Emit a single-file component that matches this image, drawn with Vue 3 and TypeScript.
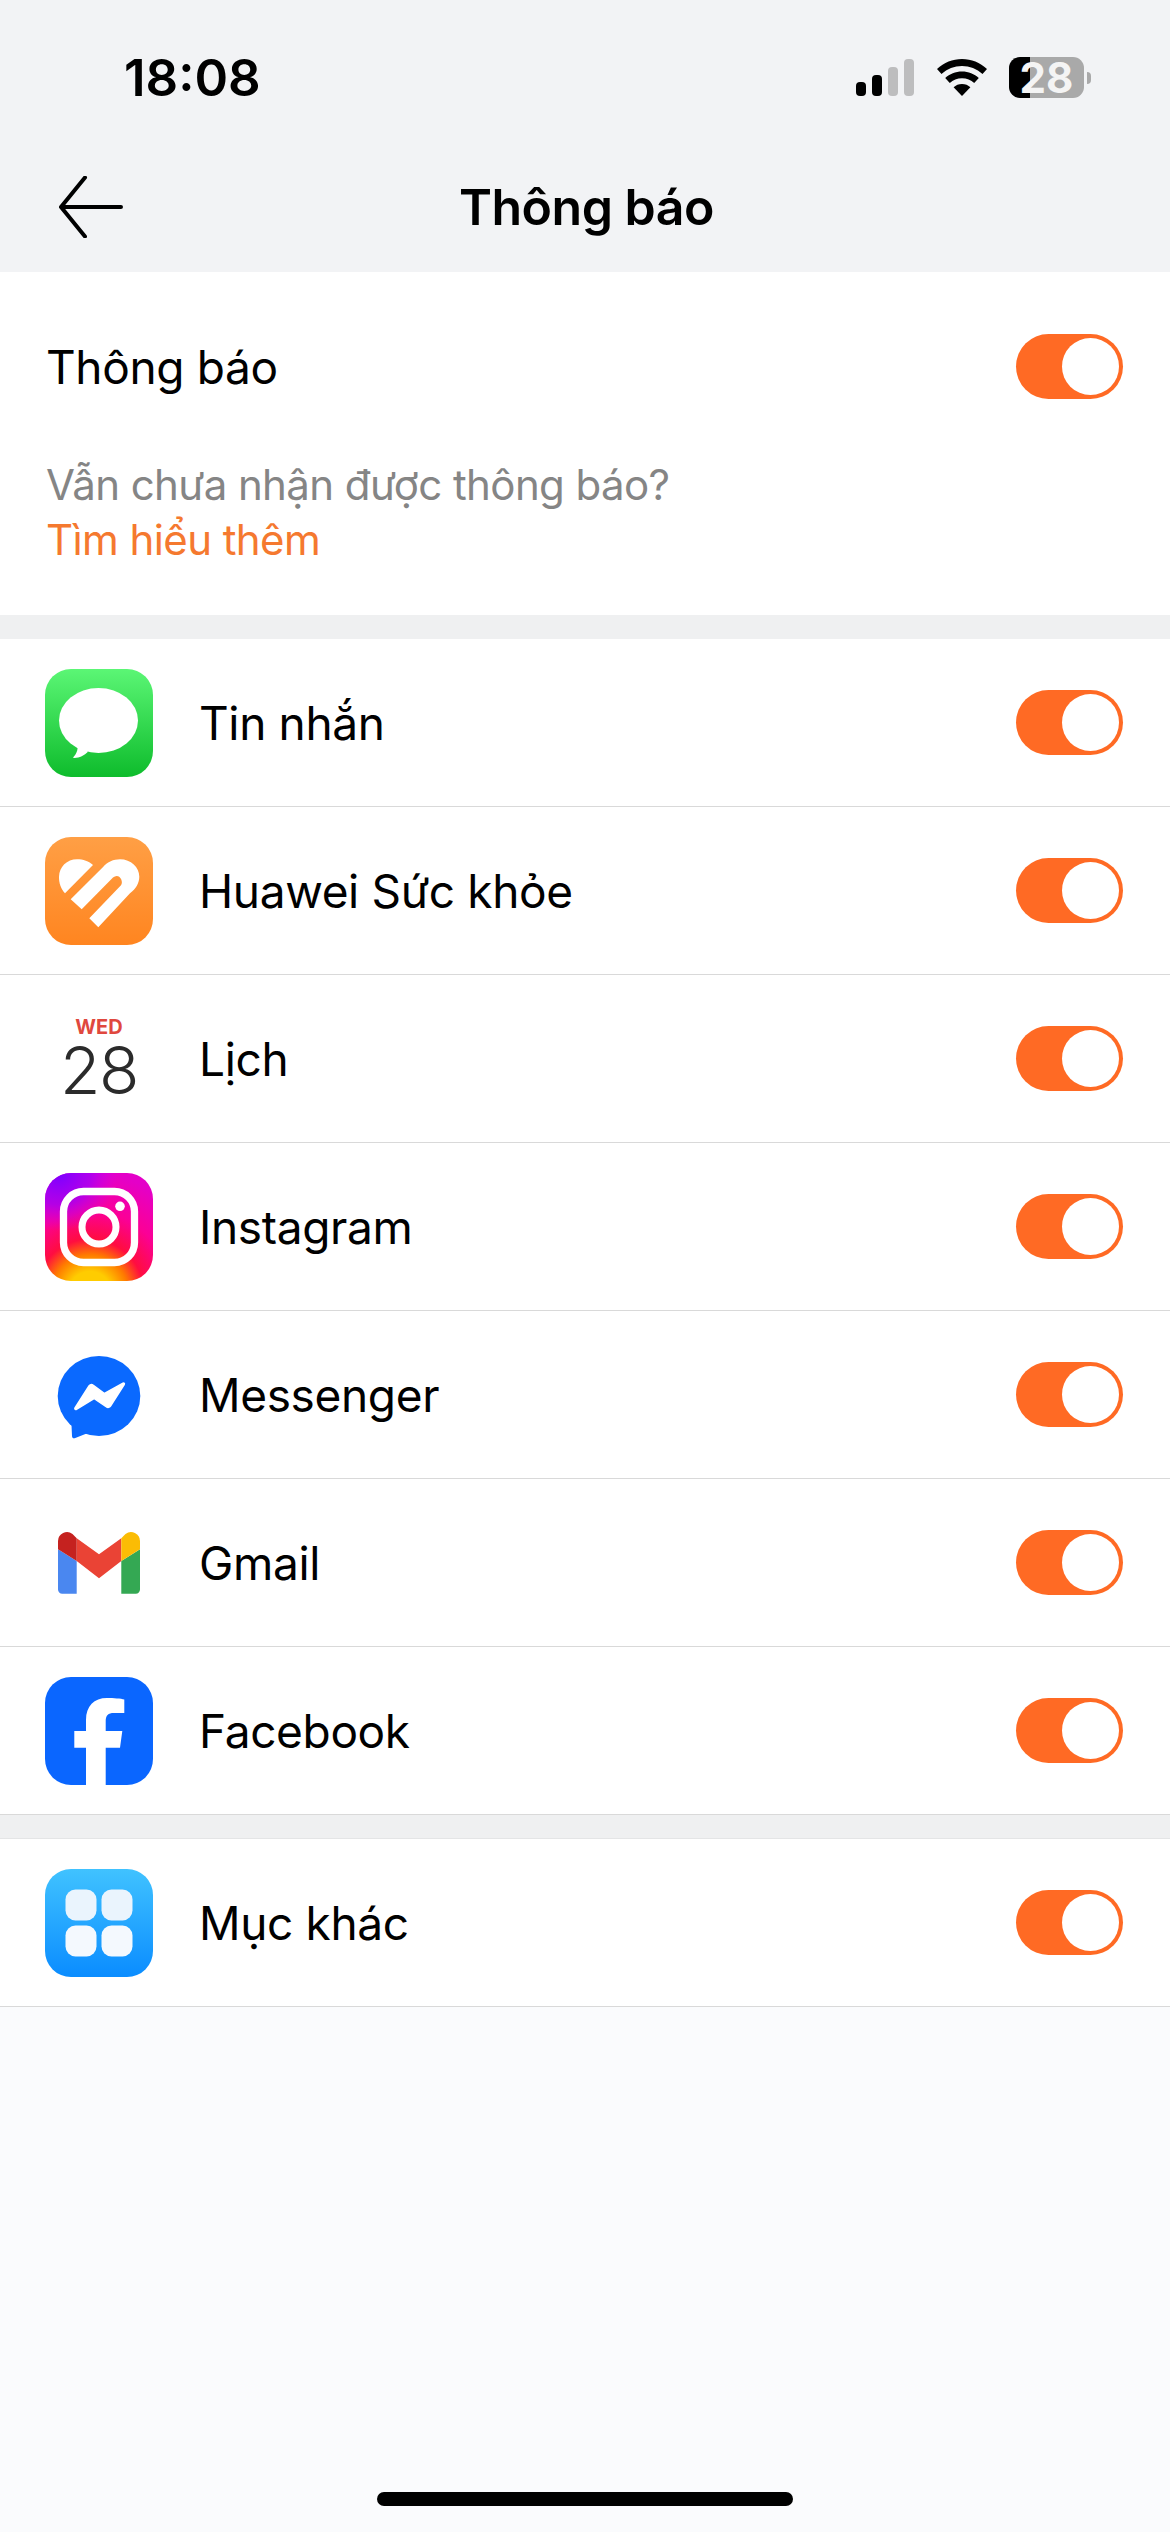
<script setup lang="ts">
const topApps = [
  { key: 'messages', name: 'Tin nhắn' },
  { key: 'health', name: 'Huawei Sức khỏe' },
  { key: 'calendar', name: 'Lịch' },
  { key: 'instagram', name: 'Instagram' },
  { key: 'messenger', name: 'Messenger' },
  { key: 'gmail', name: 'Gmail' },
  { key: 'facebook', name: 'Facebook' },
];
const otherApps = [{ key: 'other', name: 'Mục khác' }];
const groups = [topApps, otherApps];
</script>

<template>
  <div class="page">
    <header class="top">
      <div class="status">
        <span class="time">18:08</span>
        <div class="status-icons">
          <svg class="signal" width="58" height="37" viewBox="0 0 58 37">
            <rect x="0" y="23" width="10" height="14" rx="4" fill="#000" />
            <rect x="16" y="16" width="10" height="21" rx="4" fill="#000" />
            <rect x="32" y="8" width="10" height="29" rx="4" fill="#bdbdbe" />
            <rect x="48" y="0" width="10" height="37" rx="4" fill="#bdbdbe" />
          </svg>
          <svg class="wifi" width="50" height="37" viewBox="0 0 50 37">
            <path d="M25 0C15.5 0 7 3.6 0 10l4.5 5C10.3 9.8 17.3 7 25 7s14.7 2.8 20.500 8l4.500-5C43 3.600 34.500 0 25 0z" fill="#000" />
            <path d="M25 12.500c-6.500 0-12.300 2.400-16.800 6.500l4.600 5c3.200-3 7.500-4.700 12.200-4.700s9 1.700 12.200 4.700l4.600-5c-4.500-4.100-10.300-6.500-16.800-6.500z" fill="#000" />
            <path d="M25 25c-3.200 0-6.200 1.200-8.400 3.300L25 37l8.400-8.700C31.200 26.200 28.200 25 25 25z" fill="#000" />
          </svg>
          <div class="battery"><span>28</span></div>
          <div class="battery-tip"></div>
        </div>
      </div>
      <div class="nav">
        <button class="back" type="button" aria-label="Quay lại">
          <svg width="64" height="62" viewBox="0 0 64 62" fill="none" stroke="#000" stroke-width="4" stroke-linecap="round" stroke-linejoin="round">
            <path d="M62 31H2M26 1.500 2 31l24 29.500" />
          </svg>
        </button>
        <h1 class="title">Thông báo</h1>
      </div>
    </header>

    <section class="intro">
      <div class="intro-row">
        <span class="label">Thông báo</span>
        <div class="toggle"><div class="knob"></div></div>
      </div>
      <p class="hint">Vẫn chưa nhận được thông báo?</p>
      <a class="more">Tìm hiểu thêm</a>
    </section>

    <template v-for="(group, i) in groups" :key="i">
      <div class="gap" :class="{ lined: i > 0 }"></div>
      <ul class="list">
        <li v-for="app in group" :key="app.key" class="row">
          <svg class="icon" width="108" height="108" viewBox="0 0 108 108">
            <defs v-if="app.key === 'instagram'">
              <radialGradient id="igBase" gradientUnits="userSpaceOnUse" cx="45" cy="120" r="120">
                <stop offset="0.18" stop-color="#ffcc00" />
                <stop offset="0.32" stop-color="#ff7a00" />
                <stop offset="0.45" stop-color="#ff0d40" />
                <stop offset="0.68" stop-color="#fb0096" />
                <stop offset="1" stop-color="#e400c8" />
              </radialGradient>
              <radialGradient id="igTop" gradientUnits="userSpaceOnUse" cx="14" cy="0" r="58">
                <stop offset="0" stop-color="#7a00ff" />
                <stop offset="0.55" stop-color="#9a00ff" stop-opacity="0.7" />
                <stop offset="1" stop-color="#c000ff" stop-opacity="0" />
              </radialGradient>
            </defs>
            <defs v-else-if="app.key === 'messages'">
              <linearGradient id="msgBg" x1="0" y1="0" x2="0" y2="1">
                <stop offset="0" stop-color="#5bf675" />
                <stop offset="1" stop-color="#0ebc2c" />
              </linearGradient>
            </defs>
            <defs v-else-if="app.key === 'health'">
              <linearGradient id="healthBg" x1="0" y1="0" x2="0" y2="1">
                <stop offset="0" stop-color="#ff9f45" />
                <stop offset="1" stop-color="#ff8520" />
              </linearGradient>
            </defs>
            <defs v-else-if="app.key === 'other'">
              <linearGradient id="otherBg" x1="0" y1="0" x2="0" y2="1">
                <stop offset="0" stop-color="#40c2ff" />
                <stop offset="1" stop-color="#0a8cff" />
              </linearGradient>
            </defs>

            <g v-if="app.key === 'messages'">
              <rect width="108" height="108" rx="26" fill="url(#msgBg)" />
              <ellipse cx="53.500" cy="51.500" rx="39.500" ry="32.500" fill="#fff" />
              <path d="M32 74c1.500 5 .5 10-4.200 14.800 5.500.6 11.200-1.800 15.200-6z" fill="#fff" />
            </g>
            <g v-else-if="app.key === 'health'">
              <rect width="108" height="108" rx="26" fill="url(#healthBg)" />
              <path d="M20 56.300C15.500 51.500 14 46 14 40c0-10 8-17.700 18-17.700 6 0 12 2 16 5.700z" fill="#fff" />
              <path d="M25.700 62.300 58.300 29.700C62.500 25 68.500 22.300 75 22.300c11 0 19.300 8 19.300 17.400 0 6.300-3.300 12-9.300 16.600L53.300 90.300l-9-9L76 48.200c2.300-2.600 0-9.200-4.300-9.200-1.200 0-2.500.5-3.700 1.500L36.700 72.300z" fill="#fff" />
            </g>
            <g v-else-if="app.key === 'calendar'">
              <text x="54" y="29" text-anchor="middle" class="cal-day">WED</text>
              <text x="54" y="89" text-anchor="middle" class="cal-num">28</text>
            </g>
            <g v-else-if="app.key === 'instagram'">
              <rect width="108" height="108" rx="26" fill="url(#igBase)" />
              <rect width="108" height="108" rx="26" fill="url(#igTop)" />
              <rect x="18.500" y="18.500" width="71" height="71" rx="20" fill="none" stroke="#fff" stroke-width="7.300" />
              <circle cx="54" cy="54" r="17" fill="none" stroke="#fff" stroke-width="7" />
              <circle cx="75" cy="33.300" r="4.800" fill="#fff" />
            </g>
            <g v-else-if="app.key === 'messenger'">
              <ellipse cx="54" cy="55" rx="41.300" ry="40" fill="#0a69ff" />
              <path d="M26.500 84 27 95c.1 2 1.500 2.800 3.300 2l12-4.700z" fill="#0a69ff" />
              <path d="M30 67 44 45c1-1.500 2.800-1.800 4-.8l11.500 8.300 18.500-10.300c1-.5 1.800.4 1.200 1.300L65.500 65c-1 1.500-2.800 1.800-4 .8L49 57.500 31 68.500c-.8.400-1.500-.7-1-1.500z" fill="#fff" stroke="#fff" stroke-width="1.500" stroke-linejoin="round" />
            </g>
            <g v-else-if="app.key === 'gmail'">
              <path d="M13 40.300V80.500a4.200 4.200 0 0 0 4.200 4.200H31.700V52z" fill="#4a87f0" />
              <path d="M76.300 52V84.700H90.800a4.200 4.200 0 0 0 4.200-4.200V40.300z" fill="#34a853" />
              <path d="M31.700 29.300 54 45.300 76.300 29.300V52L54 69.300 31.700 52z" fill="#ea4335" />
              <path d="M13 40.300V32a9 9 0 0 1 14.500-7l4.200 4.300V52z" fill="#c5221f" />
              <path d="M95 40.300V32a9 9 0 0 0-14.500-7l-4.200 4.300V52z" fill="#fbbc04" />
            </g>
            <g v-else-if="app.key === 'facebook'">
              <rect width="108" height="108" rx="26" fill="#0a66ff" />
              <path d="M41 108V70.700H29.300V54H41V43C41 29 49 21 62 21c6.500 0 14 .5 17.300 1.500V36H69c-6 0-8.300 2.500-8.300 8V54H77.300L75 70.700H60.700V108z" fill="#fff" />
            </g>
            <g v-else>
              <rect width="108" height="108" rx="26" fill="url(#otherBg)" />
              <rect x="20.500" y="20.500" width="31" height="31" rx="10" fill="#eaf4fd" />
              <rect x="56.500" y="20.500" width="31" height="31" rx="10" fill="#eaf4fd" />
              <rect x="20.500" y="56.500" width="31" height="31" rx="10" fill="#f4f9fe" />
              <rect x="56.500" y="56.500" width="31" height="31" rx="10" fill="#f4f9fe" />
            </g>
          </svg>
          <span class="label">{{ app.name }}</span>
          <div class="toggle"><div class="knob"></div></div>
        </li>
      </ul>
    </template>

    <div class="home-bar"></div>
  </div>
</template>

<style>
html,
body {
  margin: 0;
  background: #fafbfd;
}
</style>

<style scoped>
.page {
  width: 1170px;
  height: 2532px;
  display: flex;
  flex-direction: column;
  background: #fafbfd;
  font-family: Inter, "Noto Sans", sans-serif;
  color: #000;
}

.top {
  height: 272px;
  background: #f2f3f5;
  flex-shrink: 0;
}

.status {
  height: 155px;
  padding: 57px 79px 0 124px;
  box-sizing: border-box;
  display: flex;
  justify-content: space-between;
  align-items: flex-start;
}

.time {
  font-size: 51px;
  line-height: 42px;
  font-weight: 600;
}

.status-icons {
  display: flex;
  align-items: center;
  height: 41px;
}

.signal {
  margin-right: 23px;
}

.wifi {
  margin-right: 22px;
}

.battery {
  width: 75px;
  height: 41px;
  border-radius: 11px;
  background: linear-gradient(90deg, #000 28%, #a9a9a9 28%);
  display: flex;
  align-items: center;
  justify-content: center;
}

.battery span {
  color: #f4f4f4;
  font-size: 42px;
  font-weight: 700;
  line-height: 41px;
}

.battery-tip {
  width: 4px;
  height: 12px;
  margin-left: 3px;
  border-radius: 0 4px 4px 0;
  background: #a9a9a9;
}

.nav {
  height: 117px;
  padding: 21px 0 0 59px;
  box-sizing: border-box;
  display: flex;
  align-items: flex-start;
}

.back {
  padding: 0;
  border: 0;
  background: none;
  display: block;
  height: 62px;
}

.title {
  margin: 0 0 0 336px;
  font-size: 50px;
  line-height: 62px;
  font-weight: 600;
  letter-spacing: -0.5px;
}

.intro {
  background: #fff;
  height: 343px;
  box-sizing: border-box;
  padding: 62px 47px 0 46px;
  display: flex;
  flex-direction: column;
}

.intro-row {
  display: flex;
  align-items: center;
  justify-content: space-between;
  height: 65px;
  margin-bottom: 58px;
}

.label {
  font-size: 46px;
  line-height: 60px;
  letter-spacing: -0.35px;
}

.hint {
  margin: 0;
  font-size: 42px;
  line-height: 55px;
  letter-spacing: -0.6px;
  color: #858585;
}

.more {
  font-size: 42px;
  line-height: 55px;
  letter-spacing: -0.6px;
  color: #f5792f;
}

.gap {
  height: 24px;
  background: #eff0f1;
  flex-shrink: 0;
}

.gap.lined {
  box-sizing: border-box;
  border-bottom: 1px solid #e4e5e6;
}

.list {
  margin: 0;
  padding: 0;
  list-style: none;
  background: #fff;
}

.row {
  height: 168px;
  box-sizing: border-box;
  padding: 0 47px 0 45px;
  display: flex;
  align-items: center;
  border-bottom: 1px solid #d9d9d9;
}

.icon {
  display: block;
  margin-right: 46px;
  flex-shrink: 0;
}

.row .toggle {
  margin-left: auto;
}

.toggle {
  width: 107px;
  height: 65px;
  border-radius: 33px;
  box-sizing: border-box;
  padding: 4px;
  background: #ff6a24;
  display: flex;
  justify-content: flex-end;
}

.knob {
  width: 57px;
  height: 57px;
  border-radius: 50%;
  background: #fff;
}

.cal-day {
  font-size: 20px;
  font-weight: 700;
  fill: #e0483e;
}

.cal-num {
  font-size: 66px;
  font-weight: 300;
  letter-spacing: -1.5px;
  fill: #2b2b2b;
}

.home-bar {
  width: 416px;
  height: 14px;
  border-radius: 7px;
  background: #000;
  margin: auto auto 26px;
}
</style>
